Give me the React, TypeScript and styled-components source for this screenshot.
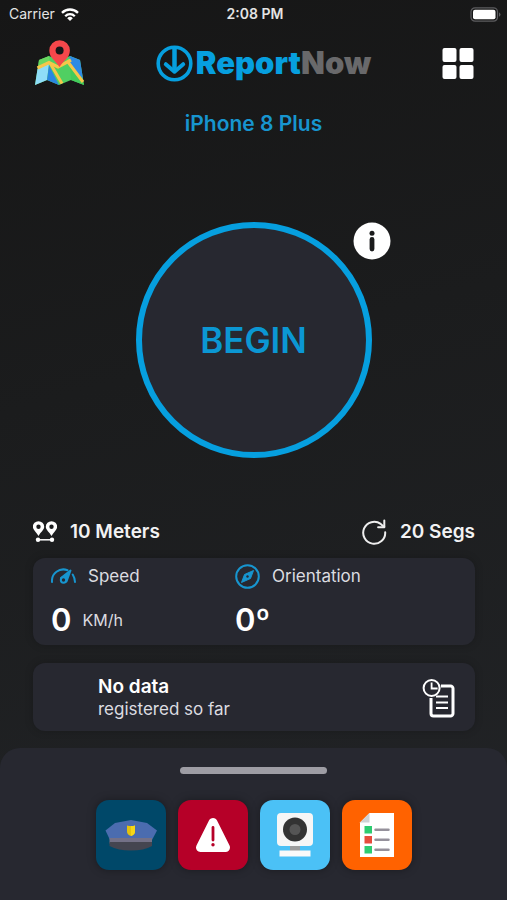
import React from 'react';
import styled, { createGlobalStyle } from 'styled-components';

const blue = '#069fdf';
const panel = '#272830';

const GlobalStyle = createGlobalStyle`
  * { box-sizing: border-box; }
  body {
    margin: 0;
    background: #1b1c1d;
    font-family: Inter, "Liberation Sans", sans-serif;
    color: #fff;
  }
  button { font: inherit; color: inherit; border: 0; padding: 0; background: none; cursor: pointer; }
  svg { display: block; flex: none; }
  h1, h2, p { margin: 0; font-weight: inherit; font-size: inherit; }
`;

const Screen = styled.div`
  min-height: 100vh;
  display: flex;
  flex-direction: column;
  background: linear-gradient(165deg, #161616 0%, #1b1c1d 40%, #222427 100%);
`;

const StatusBar = styled.div`
  display: grid;
  grid-template-columns: 1fr auto 1fr;
  align-items: center;
  height: 28px;
  padding: 0 6px 0 9px;
  font-size: 14px;
  line-height: 20px;
  color: #e4e4e4;
`;

const Carrier = styled.span`
  display: flex;
  align-items: center;
  gap: 6px;
`;

const Clock = styled.time`
  font-weight: 600;
  font-size: 14px;
`;

const BatterySlot = styled.span`
  display: flex;
  justify-content: flex-end;
`;

const Header = styled.header`
  display: flex;
  align-items: center;
  justify-content: space-between;
  height: 70px;
  padding: 0 32px 0 34px;
`;

const IconButton = styled.button`
  display: flex;
  align-items: center;
  justify-content: center;
`;

const Brand = styled.h1`
  display: flex;
  align-items: center;
  gap: 3px;
`;

const Wordmark = styled.span`
  font-size: 31px;
  line-height: 36px;
  font-weight: 900;
  color: ${blue};
`;

const Muted = styled.span`
  color: #69696b;
`;

const Device = styled.h2`
  padding-top: 12px;
  text-align: center;
  font-size: 21px;
  line-height: 28px;
  font-weight: 600;
  color: #1795cf;
`;

const Stage = styled.main`
  position: relative;
  align-self: center;
  margin-top: 84px;
`;

const BeginButton = styled.button`
  display: flex;
  align-items: center;
  justify-content: center;
  width: 236px;
  height: 236px;
  border: 6px solid ${blue};
  border-radius: 50%;
  background: ${panel};
  color: #0b97d3;
  font-size: 35px;
  line-height: 44px;
  font-weight: 600;
`;

const InfoButton = styled(IconButton)`
  position: absolute;
  top: 0;
  right: -19px;
`;

const Stats = styled.section`
  display: flex;
  flex-direction: column;
  margin: auto 32px 0 33px;
  padding-bottom: 17px;
`;

const Settings = styled.div`
  display: flex;
  justify-content: space-between;
  padding-bottom: 12px;
`;

const Setting = styled.span`
  display: flex;
  align-items: center;
  gap: 13px;
  font-size: 19px;
  line-height: 28px;
  font-weight: 600;
  color: #f2f2f3;
`;

const Card = styled.div`
  border-radius: 12px;
  background: ${panel};
  box-shadow: 0 0 8px rgba(0, 0, 0, 0.2);
`;

const Readings = styled(Card)`
  display: grid;
  grid-template-columns: 184px 1fr;
  padding: 4px 18px 5px;
`;

const Label = styled.div`
  display: flex;
  align-items: center;
  gap: 12px;
  font-size: 17px;
  line-height: 28px;
  color: #dcdce0;
`;

const Value = styled.div`
  display: flex;
  align-items: center;
  gap: 11px;
  padding-top: 10px;
  font-size: 31px;
  line-height: 40px;
  font-weight: 600;
`;

const Unit = styled.span`
  font-size: 16px;
  font-weight: 400;
  color: #dcdce0;
`;

const RecordCard = styled(Card)`
  display: flex;
  align-items: center;
  justify-content: space-between;
  height: 68px;
  margin-top: 18px;
  padding: 2px 20px 0 65px;
`;

const RecordTitle = styled.p`
  font-size: 19px;
  line-height: 22px;
  font-weight: 600;
`;

const RecordText = styled.p`
  font-size: 17px;
  line-height: 22px;
  color: #dcdce0;
`;

const Sheet = styled.footer`
  display: flex;
  flex-direction: column;
  align-items: center;
  gap: 26px;
  padding: 19px 0 30px;
  border-radius: 20px 20px 0 0;
  background: ${panel};
`;

const Handle = styled.div`
  width: 147px;
  height: 7px;
  border-radius: 4px;
  background: #9e9da4;
`;

const Actions = styled.nav`
  display: flex;
  gap: 12px;
`;

const Action = styled.button<{ $tone: string }>`
  width: 70px;
  height: 70px;
  border-radius: 13px;
  background: ${(p) => p.$tone};
  box-shadow: 0 0 8px rgba(0, 0, 0, 0.35);
`;

const WifiIcon = () => (
  <svg width="18" height="14" viewBox="0 0 18 14" fill="#fff" aria-hidden="true">
    <path d="M9 14 6.2 11.2a4 4 0 0 1 5.6 0Z" />
    <path d="M4.2 9.2a6.8 6.8 0 0 1 9.6 0" fill="none" stroke="#fff" strokeWidth="2.3" />
    <path d="M1 5.8a11.4 11.4 0 0 1 16 0" fill="none" stroke="#fff" strokeWidth="2.4" />
  </svg>
);

const BatteryIcon = () => (
  <svg width="31" height="15" viewBox="0 0 31 15" aria-label="Battery full">
    <rect x="1" y="0.8" width="26.5" height="13.4" rx="4" fill="none" stroke="#5c5c5f" strokeWidth="1.2" />
    <rect x="3" y="2.8" width="22.5" height="9.4" rx="2" fill="#fff" />
    <path d="M29 5.2q3 2.3 0 4.6Z" fill="#5c5c5f" />
  </svg>
);

const MapIcon = () => (
  <svg width="51" height="46" viewBox="0 0 51 46" aria-hidden="true">
    <path d="M5 20 15 16 25 20 36 16 46 20 50 45 37 40 25 45 13 40 1 45Z" fill="#50cf62" />
    <path d="M5 20 15 16 16 22 4 28Z" fill="#69d75f" />
    <path d="M3.5 29 15 24 13 40 1 45Z" fill="#8fddf8" />
    <path d="M15 25 25 45 13 40Z" fill="#2986e0" />
    <path d="M36 16 46 20 49 39 34 23Z" fill="#2e8ae4" />
    <path d="M36 26 48 38 50 45 37 40Z" fill="#42cb5b" />
    <path d="M3.5 28 15 22.5 24 27 37 20" fill="none" stroke="#f7c64a" strokeWidth="3.2" />
    <path d="M16 23 28 43.500M34 22 49 42" fill="none" stroke="#f7c64a" strokeWidth="3" />
    <path d="M25.500 27C22 21 15.300 18 15.300 10.500a10.300 10.300 0 0 1 20.600 0C35.900 18 29 21 25.500 27Z" fill="#f6474b" />
    <circle cx="25.600" cy="10.500" r="4" fill="#17181a" />
  </svg>
);

const LogoIcon = () => (
  <svg width="37" height="37" viewBox="0 0 37 37" fill="none" stroke={blue} aria-hidden="true">
    <circle cx="18.500" cy="18.500" r="16.300" strokeWidth="3.600" />
    <path d="M18.500 2v23" strokeWidth="4.500" />
    <path d="m9.800 19.200 8.700 7.500 8.700-7.500" strokeWidth="4" strokeLinecap="round" strokeLinejoin="round" />
  </svg>
);

const GridIcon = () => (
  <svg width="33" height="33" viewBox="0 0 33 33" fill="#fff" aria-hidden="true">
    <rect x="0.500" y="1" width="14" height="14" rx="2" />
    <rect x="17.500" y="1" width="14" height="14" rx="2" />
    <rect x="0.500" y="18" width="14" height="14" rx="2" />
    <rect x="17.500" y="18" width="14" height="14" rx="2" />
  </svg>
);

const InfoIcon = () => (
  <svg width="38" height="38" viewBox="0 0 38 38" aria-hidden="true">
    <circle cx="19" cy="19" r="18.500" fill="#fff" />
    <circle cx="19" cy="11.200" r="2.500" fill="#1a1b1c" />
    <rect x="16.600" y="15" width="4.800" height="14.500" rx="2.400" fill="#1a1b1c" />
  </svg>
);

const DistanceIcon = () => (
  <svg width="24" height="22" viewBox="0 0 24 22" aria-hidden="true">
    <path
      fillRule="evenodd"
      fill="#fff"
      d="M5.500 15C3.500 11-.2 9-.2 5.700a5.700 5.500 0 0 1 11.400 0C11.200 9 7.500 11 5.500 15Zm0-7a2.200 2.200 0 1 0 0-4.400 2.200 2.200 0 0 0 0 4.400ZM18.500 15c-2-4-5.700-6-5.700-9.300a5.700 5.500 0 0 1 11.400 0c0 3.300-3.700 5.300-5.700 9.300Zm0-7a2.200 2.200 0 1 0 0-4.400 2.200 2.200 0 0 0 0 4.400Z"
    />
    <path d="M5.500 18.800h13" stroke="#fff" strokeWidth="1.500" />
    <circle cx="5" cy="18.800" r="2.200" fill="#fff" />
    <circle cx="19" cy="18.800" r="2.200" fill="#fff" />
  </svg>
);

const RefreshIcon = () => (
  <svg width="25" height="26" viewBox="0 0 25 26" fill="none" stroke="#eee" strokeWidth="2" strokeLinecap="round" strokeLinejoin="round" aria-hidden="true">
    <path d="M23.200 13.200a11 11 0 1 1-4.500-8.300l3.500 3" />
    <path d="M22.300 1.500v6.700h-6.200" />
  </svg>
);

const SpeedIcon = () => (
  <svg width="25" height="16" viewBox="0 0 25 16" fill="none" stroke="#1795cf" strokeWidth="2" strokeLinecap="round" aria-hidden="true">
    <path d="M1 14A11.500 11.500 0 0 1 16.500 2.200" />
    <path d="M21.700 6.500q2.100 3.300 2.300 7.500" />
    <path d="m10 10 9.500-7.500-4 11Z" fill="#1795cf" strokeLinejoin="round" />
    <circle cx="12.500" cy="12" r="2.700" fill={panel} />
  </svg>
);

const CompassIcon = () => (
  <svg width="25" height="25" viewBox="0 0 25 25" aria-hidden="true">
    <circle cx="12.500" cy="12.500" r="11.300" fill="none" stroke="#1795cf" strokeWidth="2" />
    <path d="M18.500 6.500 15.500 14.500 6.500 18.500 9.500 10.500Z" fill="#1795cf" stroke="#1795cf" strokeLinejoin="round" />
    <circle cx="12.500" cy="12.500" r="1.200" fill={panel} />
  </svg>
);

const HistoryIcon = () => (
  <svg width="33" height="40" viewBox="0 0 33 40" fill="none" stroke="#fff" aria-hidden="true">
    <path d="M19 8h9.500a2.500 2.500 0 0 1 2.500 2.500v25a2.500 2.500 0 0 1-2.500 2.500h-17A2.500 2.500 0 0 1 9 35.500V20" strokeWidth="3" />
    <circle cx="9.600" cy="10" r="8" strokeWidth="2" />
    <path d="M9.600 4.500V10.500h6" strokeWidth="1.800" />
    <path d="M14 18.500h12M14 24.500h12M14 30h12" strokeWidth="2" />
  </svg>
);

const PoliceIcon = () => (
  <svg width="70" height="70" viewBox="0 0 70 70" aria-hidden="true">
    <path d="M9.500 30.500 19 23 35 20 51 23 61 30.500 56 40H14Z" fill="#4b6caf" />
    <path d="M13.500 38h42.500v5.500h-42.500Z" fill="#747187" />
    <path d="M13.500 42h42.500v4q-8 4.500-21 4.500t-21.500-4.500Z" fill="#454550" />
    <path d="M31 25.500q4 1 8 0v6q0 3-4 4.500-4-1.500-4-4.500Z" fill="#e5c30c" />
    <path d="M35 26q2 .2 4-.5v6q0 3-4 4.500Z" fill="#f7d716" />
  </svg>
);

const AlertIcon = () => (
  <svg width="70" height="70" viewBox="0 0 70 70" aria-hidden="true">
    <path d="M35 22.500 22.500 47.500h25Z" fill="#fff" stroke="#fff" strokeWidth="9" strokeLinejoin="round" />
    <path d="M35 27.500v12.500" stroke="#b60028" strokeWidth="2.800" strokeLinecap="round" />
    <circle cx="35" cy="44.700" r="1.700" fill="#b60028" />
  </svg>
);

const CameraIcon = () => (
  <svg width="70" height="70" viewBox="0 0 70 70" aria-hidden="true">
    <rect x="30" y="44" width="10" height="7" fill="#9c9c9c" />
    <rect x="17" y="13" width="36" height="33" rx="4" fill="#f6f6f6" />
    <circle cx="35" cy="29.500" r="12" fill="#333" />
    <circle cx="35" cy="29.500" r="5.500" fill="#555" />
    <rect x="19.500" y="50.500" width="31" height="6" fill="#fafafa" />
  </svg>
);

const ChecklistIcon = () => (
  <svg width="70" height="70" viewBox="0 0 70 70" aria-hidden="true">
    <path d="M27.500 13H52v44H18V22.500Z" fill="#fff" />
    <path d="M27.500 13v9.500H18Z" fill="#d0d2d5" />
    <rect x="22.500" y="26" width="7.500" height="7.500" fill="#2ecc71" />
    <rect x="22.500" y="36" width="7.500" height="7.500" fill="#e64c3c" />
    <rect x="22.500" y="46" width="7.500" height="7.500" fill="#2ecc71" />
    <path d="M33.500 29.800h13M33.500 39.800h13M33.500 49.800h13" stroke="#95919b" strokeWidth="2.500" strokeLinecap="round" />
  </svg>
);

const actions = [
  { name: 'Police', tone: '#004869', Icon: PoliceIcon },
  { name: 'Alert', tone: '#b60028', Icon: AlertIcon },
  { name: 'Camera', tone: '#4bc1f6', Icon: CameraIcon },
  { name: 'Checklist', tone: '#ff6200', Icon: ChecklistIcon },
];

export default function App() {
  return (
    <Screen>
      <GlobalStyle />
      <StatusBar>
        <Carrier>
          Carrier
          <WifiIcon />
        </Carrier>
        <Clock>2:08 PM</Clock>
        <BatterySlot>
          <BatteryIcon />
        </BatterySlot>
      </StatusBar>
      <Header>
        <IconButton aria-label="Map">
          <MapIcon />
        </IconButton>
        <Brand>
          <LogoIcon />
          <Wordmark>
            Report<Muted>Now</Muted>
          </Wordmark>
        </Brand>
        <IconButton aria-label="Menu">
          <GridIcon />
        </IconButton>
      </Header>
      <Device>iPhone 8 Plus</Device>
      <Stage>
        <BeginButton>BEGIN</BeginButton>
        <InfoButton aria-label="Information">
          <InfoIcon />
        </InfoButton>
      </Stage>
      <Stats>
        <Settings>
          <Setting>
            <DistanceIcon />
            10 Meters
          </Setting>
          <Setting>
            <RefreshIcon />
            20 Segs
          </Setting>
        </Settings>
        <Readings>
          <div>
            <Label>
              <SpeedIcon />
              Speed
            </Label>
            <Value>
              0<Unit>KM/h</Unit>
            </Value>
          </div>
          <div>
            <Label>
              <CompassIcon />
              Orientation
            </Label>
            <Value>0º</Value>
          </div>
        </Readings>
        <RecordCard>
          <div>
            <RecordTitle>No data</RecordTitle>
            <RecordText>registered so far</RecordText>
          </div>
          <IconButton aria-label="History">
            <HistoryIcon />
          </IconButton>
        </RecordCard>
      </Stats>
      <Sheet>
        <Handle />
        <Actions>
          {actions.map(({ name, tone, Icon }) => (
            <Action key={name} $tone={tone} aria-label={name}>
              <Icon />
            </Action>
          ))}
        </Actions>
      </Sheet>
    </Screen>
  );
}
